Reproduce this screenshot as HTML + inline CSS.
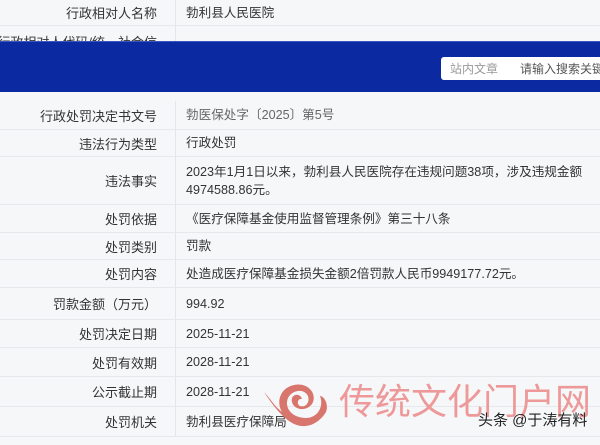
<!DOCTYPE html>
<html><head><meta charset="utf-8"><style>
*{margin:0;padding:0;box-sizing:border-box}
html,body{width:600px;height:445px;overflow:hidden}
body{background:#f6f7f9;font-family:"Liberation Sans","Noto Sans CJK SC",sans-serif;font-size:13px;color:#333;position:relative;white-space:nowrap}
.r{position:absolute;left:0;width:600px;border-bottom:1px solid #e6e8ec}
.l{position:absolute;left:0;width:176px;top:0;bottom:0;border-right:1px solid #e4e6ea;display:flex;align-items:center;justify-content:flex-end;padding-right:18px}
.v{position:absolute;left:186px;top:0;bottom:0;display:flex;align-items:center;line-height:18px;font-size:12.6px}
#band{position:absolute;left:0;top:41px;width:600px;height:51px;background:#0b2aa2;border-top:1px solid #3a57c0}
#sb{position:absolute;left:441px;top:15px;width:170px;height:23px;background:#fff;border-radius:3px;font-size:12px;color:#555;display:flex;align-items:center;overflow:hidden}
#wm{position:absolute;left:339px;top:382px;font-size:36px;line-height:40px;color:#ee8f8f;opacity:.9}
#tt{position:absolute;left:478px;top:409px;font-size:15px;color:#222}
</style></head><body>
<div class="r" style="top:0;height:26px"><div class="l">行政相对人名称</div><div class="v">勃利县人民医院</div></div>
<div class="r" style="top:26px;height:16px;overflow:hidden"><div class="l" style="align-items:flex-start;padding-top:6px">行政相对人代码/统一社会信</div></div>
<div id="band"><div id="sb"><span style="margin-left:9px;color:#999">站内文章</span><span style="margin-left:22px">请输入搜索关键字</span></div></div>
<div class="r" style="top:101px;height:29px"><div class="l">行政处罚决定书文号</div><div class="v" style="color:#666">勃医保处字〔2025〕第5号</div></div>
<div class="r" style="top:130px;height:27px"><div class="l">违法行为类型</div><div class="v">行政处罚</div></div>
<div class="r" style="top:157px;height:48px"><div class="l">违法事实</div><div class="v">2023年1月1日以来，勃利县人民医院存在违规问题38项，涉及违规金额<br>4974588.86元。</div></div>
<div class="r" style="top:205px;height:28px"><div class="l">处罚依据</div><div class="v">《医疗保障基金使用监督管理条例》第三十八条</div></div>
<div class="r" style="top:233px;height:27px"><div class="l">处罚类别</div><div class="v">罚款</div></div>
<div class="r" style="top:260px;height:28px"><div class="l">处罚内容</div><div class="v">处造成医疗保障基金损失金额2倍罚款人民币9949177.72元。</div></div>
<div class="r" style="top:288px;height:32px"><div class="l">罚款金额（万元）</div><div class="v">994.92</div></div>
<div class="r" style="top:320px;height:28px"><div class="l">处罚决定日期</div><div class="v">2025-11-21</div></div>
<div class="r" style="top:348px;height:29px"><div class="l">处罚有效期</div><div class="v">2028-11-21</div></div>
<div class="r" style="top:377px;height:30px"><div class="l">公示截止期</div><div class="v">2028-11-21</div></div>
<div class="r" style="top:407px;height:30px"><div class="l">处罚机关</div><div class="v">勃利县医疗保障局</div></div>
<svg style="position:absolute;left:262px;top:384px" width="70" height="55" viewBox="0 0 70 55">
<path d="M2 8 C10 20 20 34 32 40 C46 46 58 38 64 28 C67 20 62 12 58 12 C62 22 56 34 44 34 C30 34 22 24 26 14 C30 6 42 4 46 12 C48 18 44 24 38 22 C34 20 36 14 40 15 C38 8 28 10 30 18 C32 26 44 28 50 20 C56 10 46 -2 32 1 C18 4 14 18 20 28 C12 22 8 14 2 8 Z" fill="#d8756c"/>
</svg>
<div id="wm">传统文化门户网</div>
<div id="tt">头条 @于涛有料</div>
</body></html>
